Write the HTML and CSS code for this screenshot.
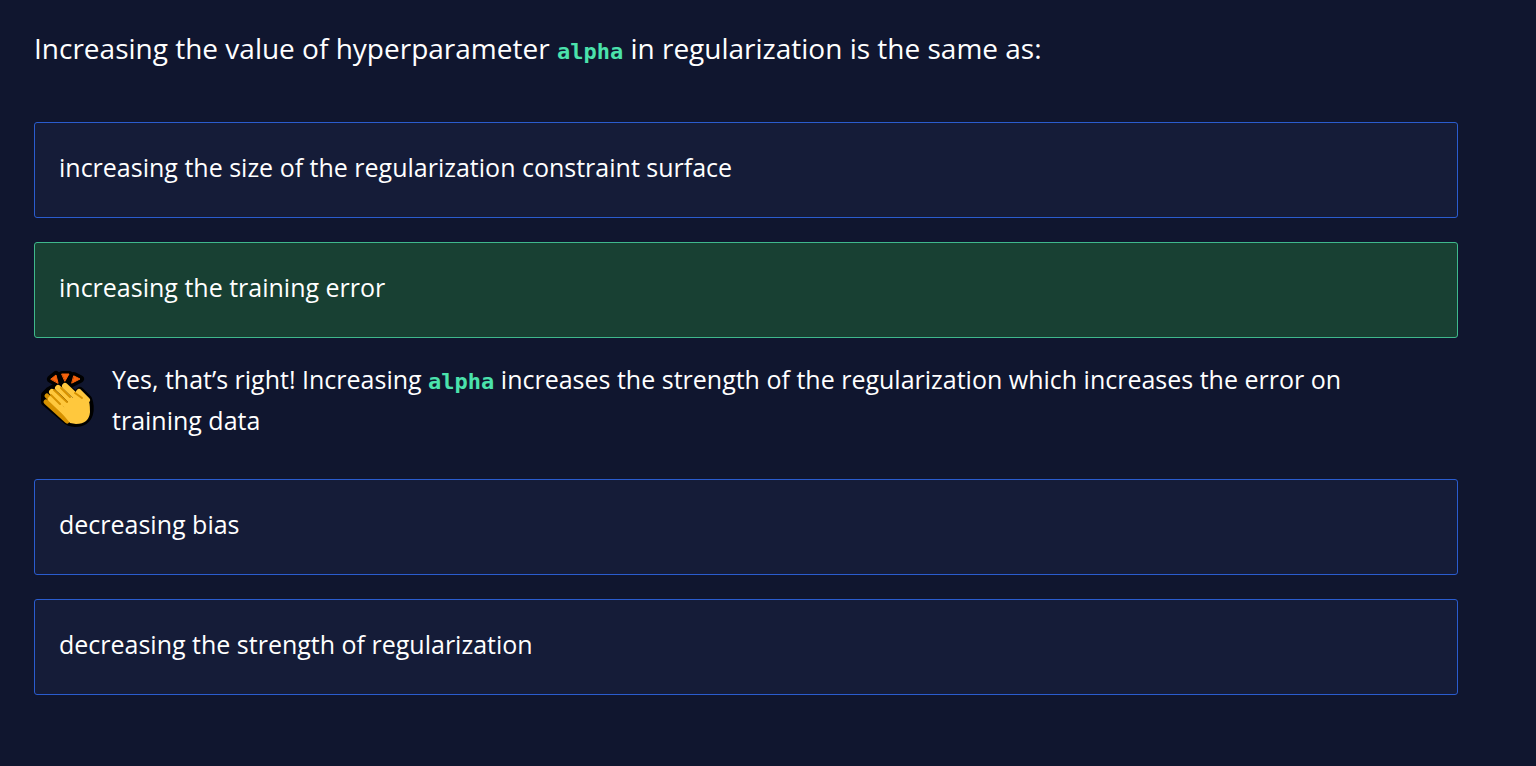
FILE: index.html
```html
<!DOCTYPE html>
<html lang="en">
<head>
<meta charset="utf-8">
<meta name="viewport" content="width=device-width, initial-scale=1">
<title>Quiz</title>
<link rel="stylesheet" href="styles.css">
</head>
<body>
<main class="quiz">
  <h1 class="question">Increasing the value of hyperparameter <code class="code">alpha</code> in regularization is the same as:</h1>
  <div class="answers">
    <button class="answer" type="button">increasing the size of the regularization constraint surface</button>
    <button class="answer answer-correct" type="button">increasing the training error</button>
    <div class="feedback">
      <svg class="clap" viewBox="0 0 56 60" fill="none" stroke-linecap="round" stroke-linejoin="round" aria-hidden="true">
        <path d="M11 10 L16 6 L18 14 Z M22 6 L29 6 L25 12 Z M34 7 L40 10 L32 14 Z M25 17 L36 27 L40 22 L48 30 Q51 38 49 45 Q46 54 35 54 Q29 54 25 50 L5 33 L5 26 L9 22 L16 18 Z" fill="#000" stroke="#000" stroke-width="8"/>
        <path d="M11 10 L16 6 L18 14 Z M22 5 L29 5 L25 12 Z M34 7 L40 10 L32 14 Z" fill="#f7630c" stroke="#f7630c"/>
        <path d="M7 27 L24 42 M6 33 L27 52" stroke="#d69100" stroke-width="5"/>
        <path d="M8 26 L22 34 L31 54 L24 49 L7 33 Z" fill="#d69100"/>
        <path d="M11 30 L30 48 M12 23 L33 42 M18 19 L38 38 M25 17 L43 34 M39 23 L47 31" stroke="#ffc83d" stroke-width="6"/>
        <path d="M29 31 L36 27 L43 26 L48 30 Q50 33 50 43 Q49 55 36 55 L30 54 L21 43 Z" fill="#ffc83d"/>
        <path d="M11 26 L20 35 M14 21 L27 33 M21 19 L30 28 M35 24 L42 29" stroke="#d69100" stroke-width="2"/>
      </svg>
      <p class="feedback-text">Yes, that’s right! Increasing <code class="code">alpha</code> increases the strength of the regularization which increases the error on training data</p>
    </div>
    <button class="answer" type="button">decreasing bias</button>
    <button class="answer" type="button">decreasing the strength of regularization</button>
  </div>
</main>
</body>
</html>
```
FILE: styles.css
```css
* {
  box-sizing: border-box;
}

body {
  margin: 0;
  min-height: 100vh;
  background: #10162f;
  color: #fff;
  font-family: "Open Sans", sans-serif;
}

.quiz {
  padding: 24px 78px 71px 34px;
}

.question {
  margin: 0 0 50px;
  font-size: 28px;
  font-weight: 400;
  line-height: 48px;
}

.code {
  color: #4be2ac;
  font-family: "DejaVu Sans Mono", monospace;
  font-size: 22px;
  font-weight: 700;
  line-height: 1;
}

.answers {
  display: flex;
  flex-direction: column;
  gap: 24px;
}

.answer {
  width: 100%;
  min-height: 96px;
  padding: 23px 24px 29px;
  border: 1px solid #2a5cce;
  border-radius: 3px;
  background: #151c38;
  color: inherit;
  font-family: inherit;
  font-size: 25px;
  line-height: 40px;
  text-align: left;
}

.answer-correct {
  border-color: #3fb88c;
  background: #184033;
}

.feedback {
  display: flex;
  align-items: flex-start;
  gap: 16px;
  margin-top: -3px;
  padding: 0 80px 14px 6px;
}

.clap {
  flex: none;
  width: 56px;
  height: 60px;
  margin-top: 10px;
}

.feedback-text {
  margin: 0;
  font-size: 25px;
  line-height: 41px;
}
```
